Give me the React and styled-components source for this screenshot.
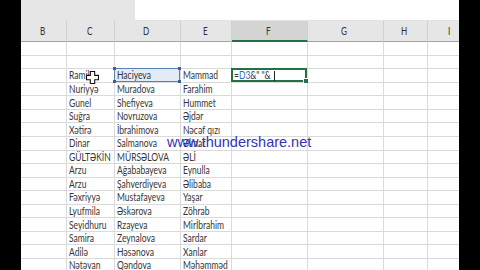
import styled, { createGlobalStyle } from "styled-components";

const GlobalStyle = createGlobalStyle`
  html, body {
    margin: 0;
    padding: 0;
    background: #000;
    overflow: hidden;
  }
`;

const columns = [
  { name: "B", width: 46 },
  { name: "C", width: 48 },
  { name: "D", width: 66 },
  { name: "E", width: 51 },
  { name: "F", width: 76 },
  { name: "G", width: 76 },
  { name: "H", width: 44 },
  { name: "I", width: 44 },
];

const people = [
  ["Ramil", "Haciyeva", "Mammad"],
  ["Nuriyyə", "Muradova", "Farahim"],
  ["Gunel", "Shefiyeva", "Hummet"],
  ["Suğra", "Novruzova", "Əjdər"],
  ["Xətirə", "İbrahimova", "Nəcəf qızı"],
  ["Dinar", "Salmanova", "Əlmar"],
  ["GÜLTƏKİN", "MÜRSƏLOVA", "ƏLİ"],
  ["Arzu", "Ağababayeva", "Eynulla"],
  ["Arzu", "Şahverdiyeva", "Əlibaba"],
  ["Fəxriyyə", "Mustafayeva", "Yaşar"],
  ["Lyufmila", "Əskərova", "Zöhrab"],
  ["Seyidhuru", "Rzayeva", "Mirİbrahim"],
  ["Samira", "Zeynalova", "Sardar"],
  ["Adilə", "Həsənova", "Xanlar"],
  ["Nətəvan", "Qəndova", "Məhəmməd"],
];

const rows = [null, null, ...people];

const App = () => {
  return (
    <>
      <GlobalStyle />
      <Screen>
        <Bezel />
        <Sheet>
          <TopBar>
            <NameArea />
            <FormulaArea />
          </TopBar>
          <Grid $cols={columns.map((c) => `${c.width}px`).join(" ")}>
            {columns.map((c) => (
              <HeaderCell key={c.name} $active={c.name === "F"}>
                <Label>{c.name}</Label>
              </HeaderCell>
            ))}
            {rows.map((row, r) =>
              columns.map((c, i) => {
                const value = row && i >= 1 && i <= 3 ? row[i - 1] : "";
                const isRef = r === 2 && c.name === "D";
                const isActive = r === 2 && c.name === "F";
                return (
                  <Cell key={`${r}-${c.name}`} $variant={isRef ? "ref" : "plain"}>
                    {isRef && (
                      <RefBox>
                        <Corner $top $left />
                        <Corner $top />
                        <Corner $left />
                        <Corner />
                      </RefBox>
                    )}
                    {isActive ? (
                      <>
                        <ActiveBox>
                          <FillHandle />
                        </ActiveBox>
                        <Label>
                          =<RefText>D3</RefText>&amp;" "&amp;
                        </Label>
                        <Caret />
                      </>
                    ) : (
                      value && <Label>{value}</Label>
                    )}
                  </Cell>
                );
              })
            )}
          </Grid>
          <Watermark>www.thundershare.net</Watermark>
          <CellCursor viewBox="0 0 12 12">
            <path
              d="M4 0.5h4v3.5h3.5v4h-3.5v3.5h-4v-3.5h-3.5v-4h3.5z"
              fill="#fff"
              stroke="#111"
              strokeWidth="1"
            />
          </CellCursor>
        </Sheet>
        <Bezel />
      </Screen>
    </>
  );
};

const Screen = styled.div`
  display: flex;
  width: 480px;
  height: 270px;
  background: #000;
  overflow: hidden;
`;

const Bezel = styled.div`
  width: 21px;
  flex: none;
  background: #000;
`;

const Sheet = styled.div`
  position: relative;
  width: 438px;
  height: 270px;
  display: flex;
  flex-direction: column;
  background: #fff;
  overflow: hidden;
  font-family: Lato, "Open Sans", sans-serif;
  color: #363636;
`;

const TopBar = styled.div`
  display: flex;
  height: 21px;
  flex: none;
`;

const NameArea = styled.div`
  width: 114px;
  background: #e6e6e6;
`;

const FormulaArea = styled.div`
  flex: 1;
  background: #fff;
  border-bottom: 1px solid #e2e2e2;
`;

const Grid = styled.div`
  display: grid;
  grid-template-columns: ${(p) => p.$cols};
  grid-template-rows: 21px;
  grid-auto-rows: 13.57px;
`;

const HeaderCell = styled.div`
  box-sizing: border-box;
  display: flex;
  align-items: center;
  justify-content: center;
  background: ${(p) => (p.$active ? "#d4d4d4" : "#e6e6e6")};
  border-right: 1px solid #d0d0d0;
  border-bottom: ${(p) => (p.$active ? "2px solid #217346" : "1px solid #a3a3a3")};
  font-size: 11px;
  color: #333;
`;

const Cell = styled.div`
  position: relative;
  box-sizing: border-box;
  display: flex;
  align-items: center;
  padding-left: 2px;
  border-right: 1px solid #dadada;
  border-bottom: 1px solid #dadada;
  background: ${(p) => (p.$variant === "ref" ? "#e3ebf6" : "#fff")};
  font-size: 11.5px;
  white-space: nowrap;
`;

const Label = styled.span`
  display: inline-block;
  transform: scaleX(0.74);
  transform-origin: left center;
  line-height: 12px;
`;

const RefText = styled.span`
  color: #3a6cc0;
`;

const Caret = styled.span`
  position: absolute;
  left: 42px;
  top: 2px;
  width: 1px;
  height: 10px;
  background: #222;
`;

const RefBox = styled.div`
  position: absolute;
  inset: -1px 0 0 -1px;
  border: 1px solid #5a80b8;
`;

const Corner = styled.span`
  position: absolute;
  width: 3px;
  height: 3px;
  background: #3d5e96;
  ${(p) => (p.$top ? "top: -2px;" : "bottom: -2px;")}
  ${(p) => (p.$left ? "left: -2px;" : "right: -2px;")}
`;

const ActiveBox = styled.div`
  position: absolute;
  inset: -1px 0 0 -1px;
  border: 2px solid #217346;
`;

const FillHandle = styled.span`
  position: absolute;
  right: -4px;
  bottom: -4px;
  width: 4px;
  height: 4px;
  background: #217346;
  border: 1px solid #fff;
`;

const Watermark = styled.div`
  position: absolute;
  left: 146px;
  top: 134px;
  font-family: "Liberation Sans", Arial, sans-serif;
  font-size: 14.5px;
  line-height: 16px;
  color: #3434b4;
  white-space: nowrap;
`;

const CellCursor = styled.svg`
  position: absolute;
  left: 65px;
  top: 71px;
  width: 13px;
  height: 13px;
`;

export default App;
